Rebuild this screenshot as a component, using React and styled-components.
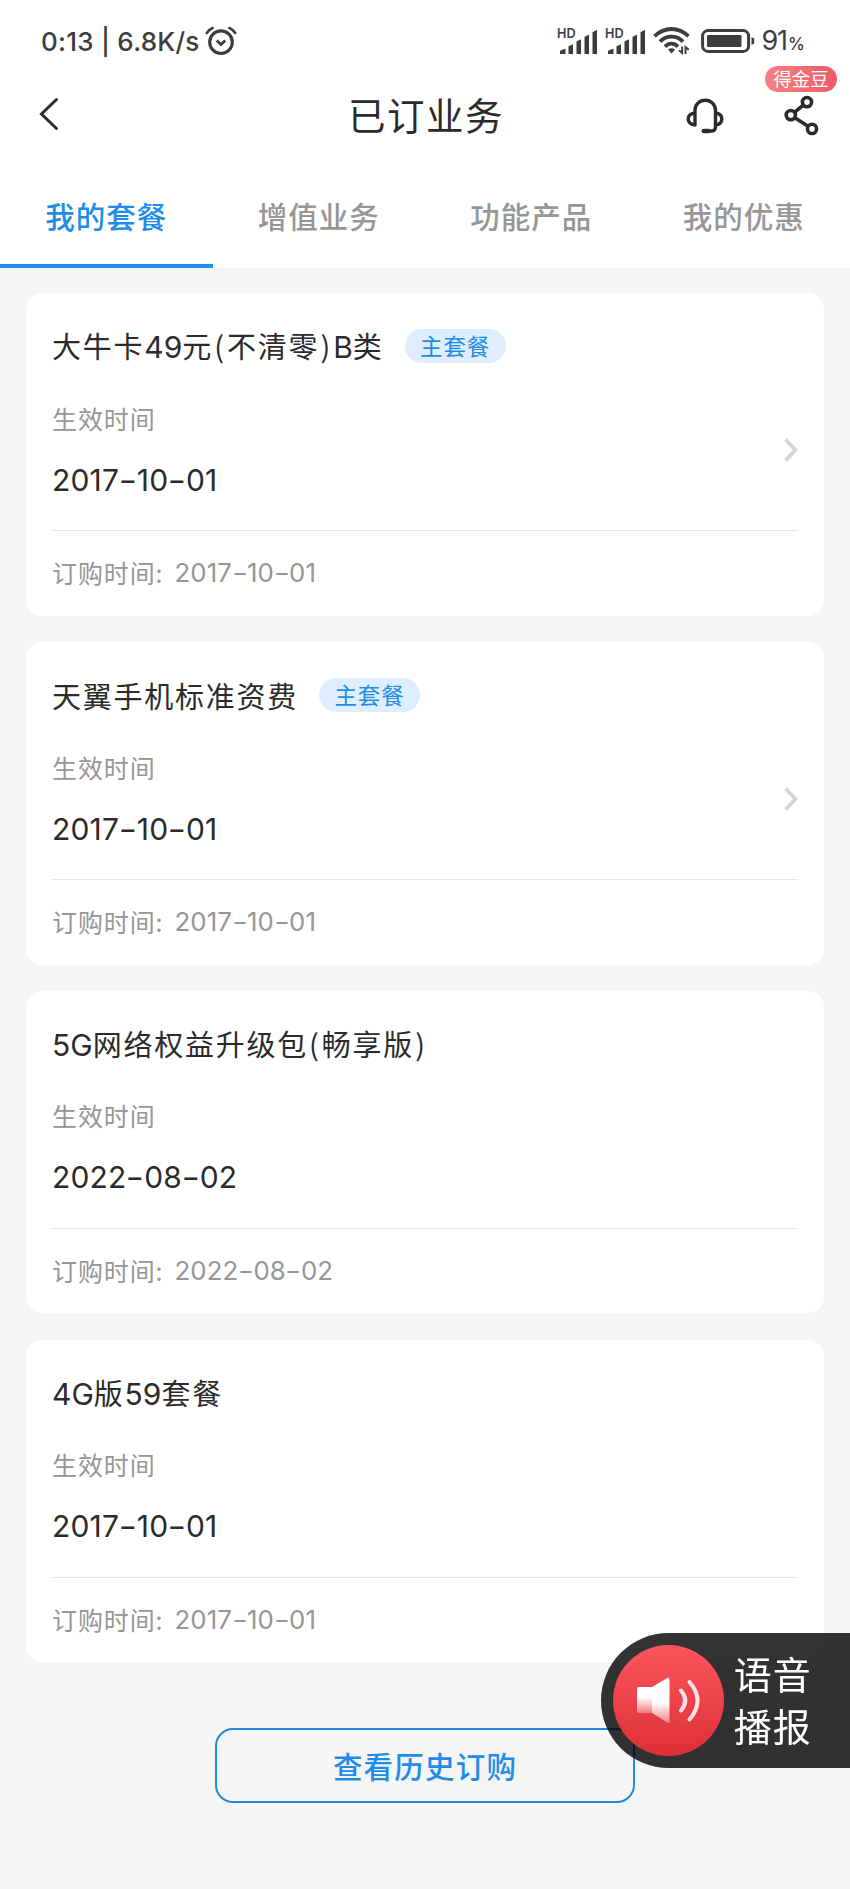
import React, { useState } from 'react';
import styled, { createGlobalStyle } from 'styled-components';

const GlobalStyle = createGlobalStyle`
  * {
    box-sizing: border-box;
  }
  body {
    margin: 0;
    background: #f5f5f5;
    font-family: 'Noto Sans CJK SC', sans-serif;
    color: #2b2b2b;
  }
  button {
    font-family: inherit;
    border: none;
    background: none;
    padding: 0;
    cursor: pointer;
  }
  svg {
    display: block;
    flex: none;
  }
`;

const Page = styled.div`
  min-height: 100vh;
  overflow: hidden;
`;

const Top = styled.header`
  height: 267.7px;
  background: #fff;
  display: flex;
  flex-direction: column;
`;

const StatusBar = styled.div`
  height: 82px;
  padding: 0 45px 0 41px;
  display: flex;
  justify-content: space-between;
  align-items: center;
  font-family: Inter, sans-serif;
  color: #3d3d3d;
`;

const StatusGroup = styled.div`
  display: flex;
  align-items: center;
  gap: ${({ $gap }) => $gap}px;
`;

const Clock = styled.span`
  padding-top: 1px;
  font-size: 26px;
  font-weight: 500;
  line-height: 30px;
  letter-spacing: 0.25px;
  white-space: nowrap;
`;

const BatteryLevel = styled.span`
  display: flex;
  align-items: baseline;
  padding-top: 2px;
  margin-left: -1px;
  font-size: 27px;
  line-height: 30px;
  letter-spacing: -1px;

  small {
    font-size: 17px;
    font-weight: 500;
    margin-left: 1px;
    letter-spacing: 0;
  }
`;

const NavBar = styled.div`
  height: 68px;
  padding: 0 30px 0 36px;
  display: grid;
  grid-template-columns: 1fr auto 1fr;
  align-items: center;
`;

const NavTitle = styled.h1`
  margin: 0;
  padding: 0 4px 4px 0;
  font-size: 37.5px;
  font-weight: 400;
  line-height: 54px;
  letter-spacing: 1.5px;
`;

const NavActions = styled.div`
  display: flex;
  justify-content: flex-end;
  align-items: center;
  gap: 60px;
`;

const IconButton = styled.button`
  position: relative;
  color: #2b2b2b;
`;

const BeanBadge = styled.span`
  position: absolute;
  top: -28.5px;
  left: -19px;
  width: 72px;
  height: 26px;
  border-radius: 13px;
  background: linear-gradient(90deg, #f98080, #ee5c68);
  color: #fff;
  font-size: 18.5px;
  line-height: 25px;
  text-align: center;
  white-space: nowrap;
`;

const Tabs = styled.nav`
  flex: 1;
  display: grid;
  grid-template-columns: repeat(4, 1fr);
`;

const Tab = styled.button`
  border-bottom: 4.7px solid ${({ $active }) => ($active ? '#2290ef' : 'transparent')};
  padding-top: 16px;
  display: flex;
  justify-content: center;
  align-items: center;
  color: ${({ $active }) => ($active ? '#1f8ceb' : '#969696')};
  font-size: 29.5px;
  font-weight: 500;
  letter-spacing: 1px;
`;

const Content = styled.main`
  padding: 25.8px 26px 0;
  display: flex;
  flex-direction: column;
  gap: 26.2px;
`;

const Card = styled.section`
  height: 322.5px;
  border-radius: 16px;
  background: #fff;
  padding: 35px 26px 0;
`;

const CardHead = styled.div`
  height: 36px;
  display: flex;
  align-items: center;
  gap: 21px;
`;

const CardTitle = styled.h2`
  margin: 0;
  font-size: 29px;
  font-weight: 400;
  line-height: 36px;
  letter-spacing: 1.75px;
  white-space: nowrap;
`;

const Latin = styled.span`
  font-family: Inter, sans-serif;
  font-size: 30px;
  letter-spacing: 0;
`;

const Paren = styled.span`
  padding: 0 1.2px;
`;

const Tag = styled.span`
  width: 101px;
  height: 34px;
  border-radius: 17px;
  background: #dfeefc;
  color: #1f8ceb;
  font-size: 22.5px;
  line-height: 32px;
  letter-spacing: 0.8px;
  text-align: center;
`;

const CardBody = styled.div`
  height: 167px;
  padding: 37px 0 33px;
  border-bottom: 1.5px solid #e6e6e6;
  display: flex;
  justify-content: space-between;
  align-items: center;

  svg {
    margin-top: 2px;
  }
`;

const Label = styled.div`
  margin-top: -1px;
  color: #969696;
  font-size: 25px;
  line-height: 36px;
  letter-spacing: 0.9px;
`;

const StartDate = styled.div`
  margin-top: 26px;
  font-family: Inter, sans-serif;
  font-size: 30px;
  line-height: 36px;
  letter-spacing: 0.2px;
`;

const Dash = styled.span`
  display: inline-block;
  margin: 0 0.06em;
  transform: scaleX(1.35);
`;

const CardFoot = styled.div`
  height: 83px;
  padding-bottom: 1px;
  display: flex;
  align-items: center;
  color: #969696;
  font-size: 25px;
  letter-spacing: 0.9px;
`;

const OrderDate = styled.span`
  font-family: Inter, sans-serif;
  font-size: 25.8px;
  letter-spacing: 0.1px;
  margin: 1px 0 0 11px;
`;

const HistoryButton = styled.button`
  align-self: center;
  width: 420px;
  height: 75px;
  margin-top: 40px;
  padding-bottom: 2px;
  border: 2px solid #2589da;
  border-radius: 18px;
  color: #1f8ceb;
  font-size: 29.5px;
  font-weight: 500;
  letter-spacing: 1.2px;
`;

const VoicePill = styled.button`
  position: fixed;
  top: 1632.7px;
  right: 0;
  width: 248.7px;
  height: 135px;
  padding-left: 12px;
  border-radius: 67.5px 0 0 67.5px;
  background: rgba(0, 0, 0, 0.8);
  color: #fff;
  display: flex;
  align-items: center;
  gap: 9.5px;
`;

const VoiceDisc = styled.span`
  width: 111px;
  height: 111px;
  border-radius: 50%;
  background: linear-gradient(#fd555d, #dd2f36);
`;

const VoiceText = styled.span`
  width: 80px;
  padding-bottom: 2px;
  font-size: 38px;
  line-height: 52px;
  letter-spacing: 1px;
  text-align: left;
`;

const plans = [
  { name: '大牛卡49元(不清零)B类', main: true, start: '2017-10-01', ordered: '2017-10-01' },
  { name: '天翼手机标准资费', main: true, start: '2017-10-01', ordered: '2017-10-01' },
  { name: '5G网络权益升级包(畅享版)', main: false, start: '2022-08-02', ordered: '2022-08-02' },
  { name: '4G版59套餐', main: false, start: '2017-10-01', ordered: '2017-10-01' },
];

const tabs = ['我的套餐', '增值业务', '功能产品', '我的优惠'];

// Letters and digits are set in Inter, brackets get a little air around them
function MixedText({ text }) {
  return text.split(/(\w+|[()])/).map((part, i) => {
    if (i % 2 === 0) return part;
    return /\w/.test(part) ? <Latin key={i}>{part}</Latin> : <Paren key={i}>{part}</Paren>;
  });
}

// Dates have long dashes between the numbers
function DateText({ value }) {
  return value.split(/(-)/).map((part, i) => (part === '-' ? <Dash key={i}>-</Dash> : part));
}

function AlarmIcon() {
  return (
    <svg width="32" height="30" viewBox="0 0 32 30" fill="none" stroke="currentColor" strokeLinecap="round">
      <circle cx="16" cy="16.2" r="11.3" strokeWidth="3.1" />
      <path d="M11.8 14.6l4.2 4 4.2-4" strokeWidth="2.8" strokeLinecap="butt" />
      <path d="M1.8 7Q4 3.6 7.6 2M30.2 7Q28 3.6 24.4 2" strokeWidth="2.6" />
    </svg>
  );
}

function SignalIcon() {
  return (
    <svg width="41" height="28" viewBox="0 -2 41 28" fill="currentColor">
      <text x="0" y="9" fontSize="12.6" fontWeight="600" fontFamily="Inter, sans-serif">HD</text>
      <path d="M3 22q3-2 5.500-2.500V25H3zM11.500 17.200l4.500-2V25h-4.500zM19.500 12.600l4.500-2.300V25h-4.500zM27.500 8l4.500-2.500V25h-4.500zM35.500 3.200l4.500-2.500V25h-4.500z" />
    </svg>
  );
}

function WifiIcon() {
  return (
    <svg width="37" height="28" viewBox="0 0 37 28" fill="none" stroke="currentColor" strokeWidth="3.8">
      <path d="M1.500 9.200Q9 2 18.500 2t17 7.200M7 14.600Q12 9.700 18.500 9.700t11.500 4.900M12 19.600q3-2.900 6.500-2.900t6.500 2.900" />
      <path d="M15 22.600q3.500-2.600 7 0L18.500 26.500z" fill="currentColor" stroke="none" />
      <path d="M29.200 19.500V26l-3.200-2.800M32.500 27v-7l3.200 2.800" strokeWidth="1.900" />
    </svg>
  );
}

function BatteryIcon() {
  return (
    <svg width="58" height="24" viewBox="-4 0 58 24" fill="none">
      <rect x="1.600" y="1.600" width="46" height="20.800" rx="5.500" stroke="currentColor" strokeWidth="3" />
      <rect x="6" y="6" width="34.500" height="12" rx="1.200" fill="currentColor" />
      <path d="M50.500 8.500h1q1.700 0 1.700 1.700v3.600q0 1.700-1.700 1.700h-1z" fill="currentColor" />
    </svg>
  );
}

function BackIcon() {
  return (
    <svg width="24" height="34" viewBox="0 0 24 34" fill="none" stroke="currentColor" strokeWidth="3">
      <path d="M20.500 2.500L5.500 17l15 14.500" strokeLinecap="round" />
    </svg>
  );
}

function HeadsetIcon() {
  return (
    <svg width="38" height="36" viewBox="0 0 38 36" fill="none" stroke="currentColor" strokeWidth="3.400">
      <path d="M9 27V12.500C9 6.500 13.500 2.200 19.200 2.200S29.500 6.500 29.500 12.500v16.200q0 4.300-4.300 4.300h-8" strokeLinecap="round" />
      <path d="M9 15.200c-4 0-6.800 2.400-6.800 5.800S5 26.800 9 26.800M29.500 15.200c4 0 6.300 2.400 6.300 5.800s-2.300 5.800-6.300 5.800" />
      <path d="M18 33h4.500" strokeWidth="4.600" strokeLinecap="round" />
    </svg>
  );
}

function ShareIcon() {
  return (
    <svg width="36" height="43" viewBox="0 -0.500 36 43" fill="none" stroke="currentColor" strokeWidth="3.600">
      <circle cx="23" cy="6.600" r="4.600" />
      <circle cx="6.800" cy="19.600" r="4.600" />
      <circle cx="28" cy="33.400" r="4.600" />
      <path d="M10.500 16.800l8.900-7.300M10.900 22.200l13.100 8.600" />
    </svg>
  );
}

function ChevronIcon() {
  return (
    <svg width="16" height="26" viewBox="0 0 16 26" fill="none" stroke="#d4d4d4" strokeWidth="3.800">
      <path d="M3.600 2.500l9.800 10.500-9.800 10.500" />
    </svg>
  );
}

function SpeakerIcon() {
  return (
    <svg width="111" height="111" viewBox="0 0 111 111" fill="none">
      <defs>
        <linearGradient id="horn" x1="0" y1="0" x2="0" y2="1">
          <stop offset="0.550" stopColor="#fff" />
          <stop offset="1" stopColor="#fff" stopOpacity="0.350" />
        </linearGradient>
        <linearGradient id="box" x1="0" y1="0" x2="0" y2="1">
          <stop offset="0.400" stopColor="#fff" />
          <stop offset="1" stopColor="#fff" stopOpacity="0.300" />
        </linearGradient>
      </defs>
      <path d="M39 42L53.500 33.500Q56.500 31.500 56.500 34.500V76.500Q56.500 79.500 53.500 77L39 68z" fill="url(#horn)" />
      <path d="M26 42H39V68H26Q24 68 24 66V44Q24 42 26 42z" fill="url(#box)" />
      <path d="M68 45.500Q76.500 55.500 68 65.500" stroke="#fff" strokeOpacity="0.850" strokeWidth="4" strokeLinecap="round" />
      <path d="M76.500 37Q92.500 55.500 76.500 74.500" stroke="#fff" strokeOpacity="0.850" strokeWidth="4" strokeLinecap="round" />
    </svg>
  );
}

function PlanCard({ plan }) {
  return (
    <Card>
      <CardHead>
        <CardTitle><MixedText text={plan.name} /></CardTitle>
        {plan.main && <Tag>主套餐</Tag>}
      </CardHead>
      <CardBody>
        <div>
          <Label>生效时间</Label>
          <StartDate><DateText value={plan.start} /></StartDate>
        </div>
        {plan.main && <ChevronIcon />}
      </CardBody>
      <CardFoot>
        订购时间:
        <OrderDate><DateText value={plan.ordered} /></OrderDate>
      </CardFoot>
    </Card>
  );
}

function App() {
  const [active, setActive] = useState(0);

  return (
    <>
      <GlobalStyle />
      <Page>
        <Top>
          <StatusBar>
            <StatusGroup $gap={5}>
              <Clock>0:13 | 6.8K/s</Clock>
              <AlarmIcon />
            </StatusGroup>
            <StatusGroup $gap={7}>
              <SignalIcon />
              <SignalIcon />
              <WifiIcon />
              <BatteryIcon />
              <BatteryLevel>91<small>%</small></BatteryLevel>
            </StatusGroup>
          </StatusBar>
          <NavBar>
            <div>
              <IconButton aria-label="返回"><BackIcon /></IconButton>
            </div>
            <NavTitle>已订业务</NavTitle>
            <NavActions>
              <IconButton aria-label="客服"><HeadsetIcon /></IconButton>
              <IconButton aria-label="分享">
                <ShareIcon />
                <BeanBadge>得金豆</BeanBadge>
              </IconButton>
            </NavActions>
          </NavBar>
          <Tabs>
            {tabs.map((name, i) => (
              <Tab key={name} $active={i === active} onClick={() => setActive(i)}>{name}</Tab>
            ))}
          </Tabs>
        </Top>
        <Content>
          {plans.map(plan => (
            <PlanCard key={plan.name} plan={plan} />
          ))}
          <HistoryButton>查看历史订购</HistoryButton>
        </Content>
        <VoicePill>
          <VoiceDisc><SpeakerIcon /></VoiceDisc>
          <VoiceText>语音<br />播报</VoiceText>
        </VoicePill>
      </Page>
    </>
  );
}

export default App;
